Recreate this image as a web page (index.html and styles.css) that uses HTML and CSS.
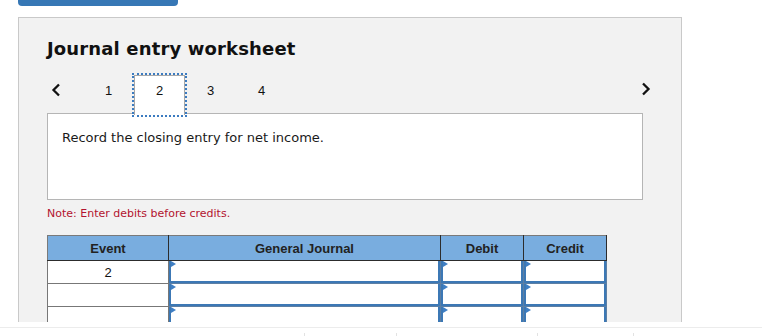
FILE: index.html
```html
<!DOCTYPE html>
<html>
<head>
    <link rel="stylesheet" href="styles.css">
</head>
<body>
    <div class="topbar"></div>
    <div class="panel">
        <h1 class="title">Journal entry worksheet</h1>
        <div class="nav">
            <svg class="chev" width="12" height="14" viewBox="0 0 12 14">
                <path d="M9 1.5 L3.5 7 L9 12.5" />
            </svg>
            <div class="tab">1</div>
            <div class="tab active">2</div>
            <div class="tab">3</div>
            <div class="tab">4</div>
            <svg class="chev next" width="10" height="14" viewBox="0 0 10 14">
                <path d="M2 1.5 L7.5 7 L2 12.5" />
            </svg>
        </div>
        <div class="question">Record the closing entry for net income.</div>
        <div class="note">Note: Enter debits before credits.</div>
        <table class="journal">
            <colgroup>
                <col class="c-event">
                <col class="c-journal">
                <col class="c-amount">
                <col class="c-amount">
            </colgroup>
            <thead>
                <tr>
                    <th>Event</th>
                    <th>General Journal</th>
                    <th>Debit</th>
                    <th>Credit</th>
                </tr>
            </thead>
            <tbody>
                <tr>
                    <td class="event">2</td>
                    <td class="cell"><div class="field"></div></td>
                    <td class="cell"><div class="field"></div></td>
                    <td class="cell"><div class="field"></div></td>
                </tr>
                <tr>
                    <td class="event"></td>
                    <td class="cell"><div class="field"></div></td>
                    <td class="cell"><div class="field"></div></td>
                    <td class="cell"><div class="field"></div></td>
                </tr>
                <tr>
                    <td class="event"></td>
                    <td class="cell"><div class="field"></div></td>
                    <td class="cell"><div class="field"></div></td>
                    <td class="cell"><div class="field"></div></td>
                </tr>
            </tbody>
        </table>
    </div>
    <div class="footer">
        <div></div>
        <div class="tick"></div>
        <div class="tick"></div>
        <div class="tick"></div>
        <div class="tick"></div>
    </div>
</body>
</html>
```

FILE: styles.css
```css
body {
  margin: 0;
  background: #fff;
  font-family: "DejaVu Sans", Verdana, sans-serif;
  color: #111;
}

.topbar {
  margin-left: 18px;
  width: 160px;
  height: 6px;
  background: #3677b5;
  border-radius: 0 0 4px 4px;
}

.panel {
  box-sizing: border-box;
  margin: 11px 0 0 18px;
  width: 664px;
  height: 305px;
  padding: 20px 38px 0 28px;
  background: #f2f2f2;
  border: 1px solid #c9c9c9;
  border-bottom: none;
  overflow: hidden;
}

.title {
  margin: 0;
  font-size: 18px;
  line-height: 22px;
  font-weight: bold;
  letter-spacing: 0.15px;
  color: #111;
}

/* step tabs */
.nav {
  display: flex;
  align-items: flex-start;
  height: 38px;
  margin-top: 15px;
  margin-right: -8px;
}

.chev {
  margin: 8px 21px 0 3px;
  fill: none;
  stroke: #111;
  stroke-width: 2.3;
}

.chev.next {
  margin: 7px 0 0 auto;
}

.tab {
  box-sizing: border-box;
  position: relative;
  z-index: 1;
  width: 51px;
  height: 40px;
  padding-top: 7px;
  border: 1px solid transparent;
  text-align: center;
  font-family: "Liberation Sans", Arial, sans-serif;
  font-size: 13px;
  line-height: 16px;
  color: #111;
}

.tab.active {
  background: #fff;
  border-color: #a8a8a8;
  border-bottom: none;
  outline: 2px dotted #3b7bc0;
}

.question {
  box-sizing: border-box;
  height: 87px;
  padding: 16px 14px 0;
  background: #fff;
  border: 1px solid #b5b5b5;
  font-size: 13px;
  line-height: 16px;
  color: #1a1a1a;
}

.note {
  margin-top: 7px;
  font-size: 11px;
  line-height: 14px;
  color: #b3132f;
}

/* journal table */
.journal {
  margin-top: 14px;
  border-collapse: collapse;
  table-layout: fixed;
  width: 559px;
  font-family: "Liberation Sans", Arial, sans-serif;
  font-size: 13px;
}

.c-event { width: 121px; }
.c-journal { width: 272px; }
.c-amount { width: 83px; }

.journal th {
  height: 24px;
  padding: 0;
  background: #79addf;
  border: 1px solid #2c2c2c;
  border-top-color: #7a7a7a;
  font-weight: bold;
  color: #222;
  text-align: center;
}

.journal th:first-child {
  border-left-color: #7a7a7a;
}

.journal td {
  height: 22px;
  padding: 0;
  border: 1px solid #777;
}

.journal td.event {
  background: #fff;
  text-align: center;
  color: #111;
}

.journal td.cell {
  border-color: #5d7fa3;
}

.field {
  position: relative;
  box-sizing: border-box;
  height: 22px;
  background: #fff;
  border: 2px solid #3c78b5;
  border-top: none;
}

.field::before {
  content: '';
  position: absolute;
  top: 0;
  left: 0;
  border-left: 5px solid #3f7fc4;
  border-top: 3px solid transparent;
  border-bottom: 3px solid transparent;
}

.footer {
  display: grid;
  grid-template-columns: 304px 92px 141px 96px 1fr;
  margin-top: 5px;
  border-top: 1px solid #ececec;
}

.footer div {
  height: 10px;
  margin-top: 5px;
}

.footer .tick {
  border-left: 1px solid #e2e2e2;
}
```
